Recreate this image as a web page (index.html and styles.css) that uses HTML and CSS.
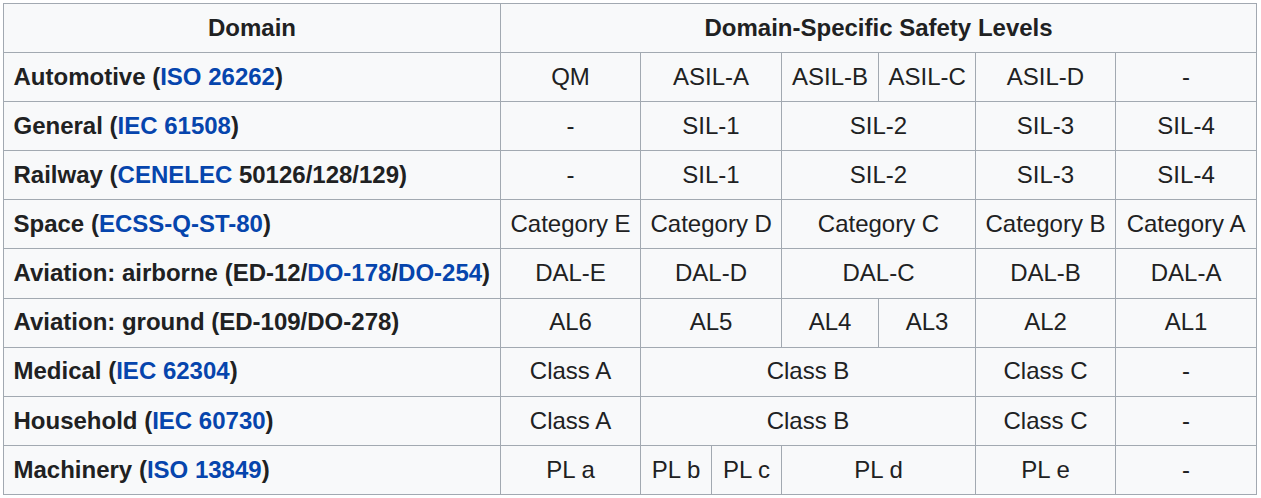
FILE: index.html
```html
<!DOCTYPE html>
<html lang="en">
<head>
<meta charset="utf-8">
<title>Domain-Specific Safety Levels</title>
<link rel="stylesheet" href="styles.css">
</head>
<body>
<table class="wikitable">
  <colgroup>
    <col class="c-domain">
    <col class="c-wide">
    <col class="c-half">
    <col class="c-half2">
    <col class="c-mid">
    <col class="c-mid">
    <col class="c-wide">
    <col class="c-wide2">
  </colgroup>
  <thead>
    <tr>
      <th>Domain</th>
      <th colspan="7">Domain-Specific Safety Levels</th>
    </tr>
  </thead>
  <tbody>
    <tr>
      <th class="row-head">Automotive (<a href="#">ISO 26262</a>)</th>
      <td>QM</td>
      <td colspan="2">ASIL-A</td>
      <td>ASIL-B</td>
      <td>ASIL-C</td>
      <td>ASIL-D</td>
      <td>-</td>
    </tr>
    <tr>
      <th class="row-head">General (<a href="#">IEC 61508</a>)</th>
      <td>-</td>
      <td colspan="2">SIL-1</td>
      <td colspan="2">SIL-2</td>
      <td>SIL-3</td>
      <td>SIL-4</td>
    </tr>
    <tr>
      <th class="row-head">Railway (<a href="#">CENELEC</a> 50126/128/129)</th>
      <td>-</td>
      <td colspan="2">SIL-1</td>
      <td colspan="2">SIL-2</td>
      <td>SIL-3</td>
      <td>SIL-4</td>
    </tr>
    <tr>
      <th class="row-head">Space (<a href="#">ECSS-Q-ST-80</a>)</th>
      <td>Category E</td>
      <td colspan="2">Category D</td>
      <td colspan="2">Category C</td>
      <td>Category B</td>
      <td>Category A</td>
    </tr>
    <tr>
      <th class="row-head">Aviation: airborne (ED-12/<a href="#">DO-178</a>/<a href="#">DO-254</a>)</th>
      <td>DAL-E</td>
      <td colspan="2">DAL-D</td>
      <td colspan="2">DAL-C</td>
      <td>DAL-B</td>
      <td>DAL-A</td>
    </tr>
    <tr>
      <th class="row-head">Aviation: ground (ED-109/DO-278)</th>
      <td>AL6</td>
      <td colspan="2">AL5</td>
      <td>AL4</td>
      <td>AL3</td>
      <td>AL2</td>
      <td>AL1</td>
    </tr>
    <tr>
      <th class="row-head">Medical (<a href="#">IEC 62304</a>)</th>
      <td>Class A</td>
      <td colspan="4">Class B</td>
      <td>Class C</td>
      <td>-</td>
    </tr>
    <tr>
      <th class="row-head">Household (<a href="#">IEC 60730</a>)</th>
      <td>Class A</td>
      <td colspan="4">Class B</td>
      <td>Class C</td>
      <td>-</td>
    </tr>
    <tr>
      <th class="row-head">Machinery (<a href="#">ISO 13849</a>)</th>
      <td>PL a</td>
      <td>PL b</td>
      <td>PL c</td>
      <td colspan="2">PL d</td>
      <td>PL e</td>
      <td>-</td>
    </tr>
  </tbody>
</table>
</body>
</html>
```

FILE: styles.css
```css
html, body {
  margin: 0;
  padding: 0;
  background: #ffffff;
}

body {
  padding: 3px;
  font-family: "Liberation Sans", Arial, sans-serif;
  font-size: 24px;
  color: #202122;
}

.wikitable {
  border-collapse: collapse;
  table-layout: fixed;
  width: 1254px;
  background: #f8f9fa;
  color: #202122;
  border: 1px solid #a2a9b1;
}

.c-domain { width: 497px; }
.c-wide { width: 140px; }
.c-wide2 { width: 141px; }
.c-half { width: 71px; }
.c-half2 { width: 70px; }
.c-mid { width: 97px; }

.wikitable th,
.wikitable td {
  border: 1px solid #a2a9b1;
  padding: 4.8px 9.5px;
  line-height: 38.5px;
  text-align: center;
  vertical-align: middle;
  white-space: nowrap;
  overflow: visible;
}

.wikitable th {
  background: #f8f9fa;
  font-weight: bold;
}

.wikitable th.row-head {
  text-align: left;
}

.wikitable td {
  font-weight: normal;
}

.wikitable a {
  color: #0645ad;
  text-decoration: none;
}
```
